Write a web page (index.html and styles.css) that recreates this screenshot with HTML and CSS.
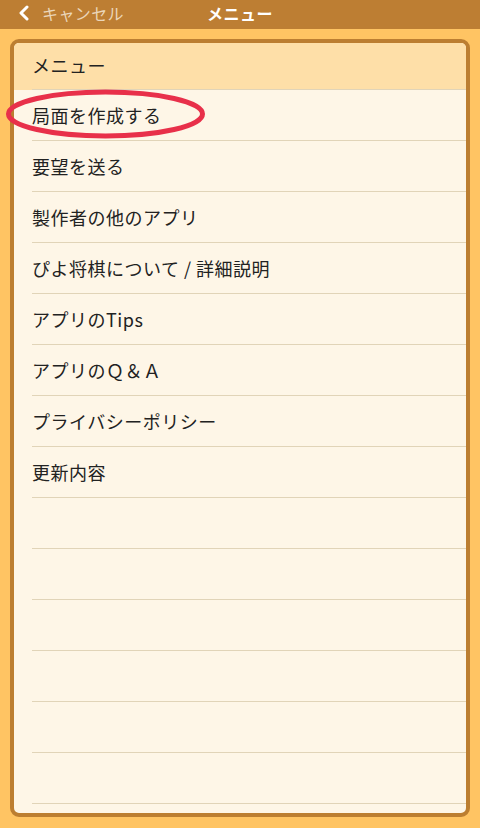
FILE: index.html
```html
<!DOCTYPE html>
<html lang="ja">
<head>
<meta charset="utf-8">
<title>メニュー</title>
<link rel="stylesheet" href="styles.css">
</head>
<body>
<header class="navbar">
  <div class="nav-back">
    <svg class="chev" width="12" height="16" viewBox="0 0 12 16"><path d="M9 2 L3 8 L9 14" fill="none" stroke="#ffffff" stroke-width="3" stroke-linecap="round" stroke-linejoin="round"/></svg>
    <span class="nav-cancel">キャンセル</span>
  </div>
  <div class="nav-title">メニュー</div>
</header>
<main class="page">
  <div class="card">
    <div class="row head"><div class="cell">メニュー</div></div>
    <div class="row"><div class="cell">局面を作成する</div></div>
    <div class="row"><div class="cell">要望を送る</div></div>
    <div class="row"><div class="cell">製作者の他のアプリ</div></div>
    <div class="row"><div class="cell">ぴよ将棋について / 詳細説明</div></div>
    <div class="row"><div class="cell">アプリのTips</div></div>
    <div class="row"><div class="cell">アプリのＱ＆Ａ</div></div>
    <div class="row"><div class="cell">プライバシーポリシー</div></div>
    <div class="row"><div class="cell">更新内容</div></div>
    <div class="row"><div class="cell"></div></div>
    <div class="row"><div class="cell"></div></div>
    <div class="row"><div class="cell"></div></div>
    <div class="row"><div class="cell"></div></div>
    <div class="row"><div class="cell"></div></div>
    <div class="row"><div class="cell"></div></div>
  </div>
</main>
<svg class="circle" width="220" height="60" viewBox="0 0 220 60"><ellipse cx="105.5" cy="29" rx="97" ry="22" fill="none" stroke="#E8304A" stroke-width="5"/></svg>
</body>
</html>
```
FILE: styles.css
```css
* { box-sizing: border-box; }
html, body {
  margin: 0;
  padding: 0;
  width: 480px;
  height: 828px;
  overflow: hidden;
  background: #FFC463;
  font-family: "Noto Sans CJK JP", "Noto Sans", sans-serif;
}
.navbar {
  position: relative;
  height: 29px;
  background: #BD7E33;
  display: flex;
  align-items: center;
  justify-content: center;
}
.nav-back {
  position: absolute;
  left: 18px;
  top: 0;
  height: 26px;
  display: flex;
  align-items: center;
  gap: 12px;
}
.chev { display: block; }
.nav-cancel {
  color: #EBD6BA;
  font-size: 16px;
  letter-spacing: 0.4px;
}
.nav-title {
  color: #ffffff;
  font-weight: bold;
  font-size: 16px;
  letter-spacing: 0.5px;
  margin-top: -3px;
}
.page {
  padding: 10px 10px 0 10px;
}
.card {
  height: 778px;
  border: 4px solid #BC7E31;
  border-radius: 9px;
  background: #FEF6E7;
  overflow: hidden;
}
.row {
  height: 51px;
  padding-left: 18px;
}
.row.head {
  height: 47px;
  background: #FEDFA8;
}
.cell {
  height: 100%;
  border-bottom: 1.5px solid #E1D4B8;
  display: flex;
  align-items: center;
  font-size: 18px;
  letter-spacing: 0.5px;
  color: #222222;
}
.row.head .cell { padding-bottom: 3px; }
.circle {
  position: absolute;
  left: 0;
  top: 85px;
}
```
